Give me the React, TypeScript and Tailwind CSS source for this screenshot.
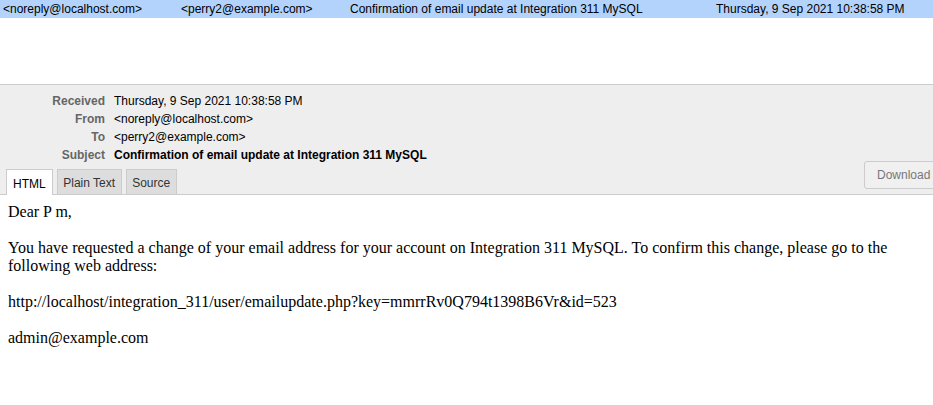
import React from "react";

export default function App() {
  const body = `Dear P m,

You have requested a change of your email address for your account on Integration 311 MySQL. To confirm this change, please go to the
following web address:

http://localhost/integration_311/user/emailupdate.php?key=mmrrRv0Q794t1398B6Vr&id=523

admin@example.com`;
  return (
    <div className="w-[933px] h-[405px] overflow-hidden bg-white font-['Liberation_Sans',Arial,sans-serif] text-[12px] text-black">
      <div className="h-[84px]">
        <div className="flex h-[18px] items-center bg-[#b3d3fd] whitespace-nowrap">
          <div className="w-[178px] pl-[3px]">&lt;noreply@localhost.com&gt;</div>
          <div className="w-[169px] pl-[3px]">&lt;perry2@example.com&gt;</div>
          <div className="w-[366px] pl-[3px]">Confirmation of email update at Integration 311 MySQL</div>
          <div className="pl-[3px]">Thursday, 9 Sep 2021 10:38:58 PM</div>
        </div>
      </div>
      <div className="relative border-t border-[#ccc] bg-[#eeeeee] pt-[7px]">
        <div className="flex flex-col">
          {[
            ["Received", "Thursday, 9 Sep 2021 10:38:58 PM", false],
            ["From", "<noreply@localhost.com>", false],
            ["To", "<perry2@example.com>", false],
            ["Subject", "Confirmation of email update at Integration 311 MySQL", true],
          ].map(([k, v, b]) => (
            <div key={k as string} className="flex h-[18px] items-center">
              <div className="w-[105px] pr-0 text-right font-bold text-[#666]">{k}</div>
              <div className={"pl-[9px] " + (b ? "font-bold" : "")}>{v}</div>
            </div>
          ))}
        </div>
        <div className="mt-[5px] flex gap-[4px] pl-[6px]">
          <div className="-mb-px h-[26px] border border-b-0 border-[#ccc] bg-white px-[6px] pt-[5px]">HTML</div>
          <div className="h-[25px] w-[65px] border border-b-0 border-[#ccc] bg-[#dddddd] pt-[4px] text-center text-[#333]">Plain Text</div>
          <div className="h-[25px] w-[51px] border border-b-0 border-[#ccc] bg-[#dddddd] pt-[4px] text-center text-[#333]">Source</div>
        </div>
        <div className="border-b border-[#ccc]" />
        <div className="absolute left-[864px] top-[76px] flex h-[28px] w-[80px] items-center rounded-[3px] border border-[#ccc] bg-[#f0f0f0] pl-[12px] text-[#777]">
          Download
        </div>
      </div>
      <div className="whitespace-pre-wrap p-[8px] font-['Liberation_Serif','Times_New_Roman',serif] text-[16px] leading-[18px]">
        {body}
      </div>
    </div>
  );
}
